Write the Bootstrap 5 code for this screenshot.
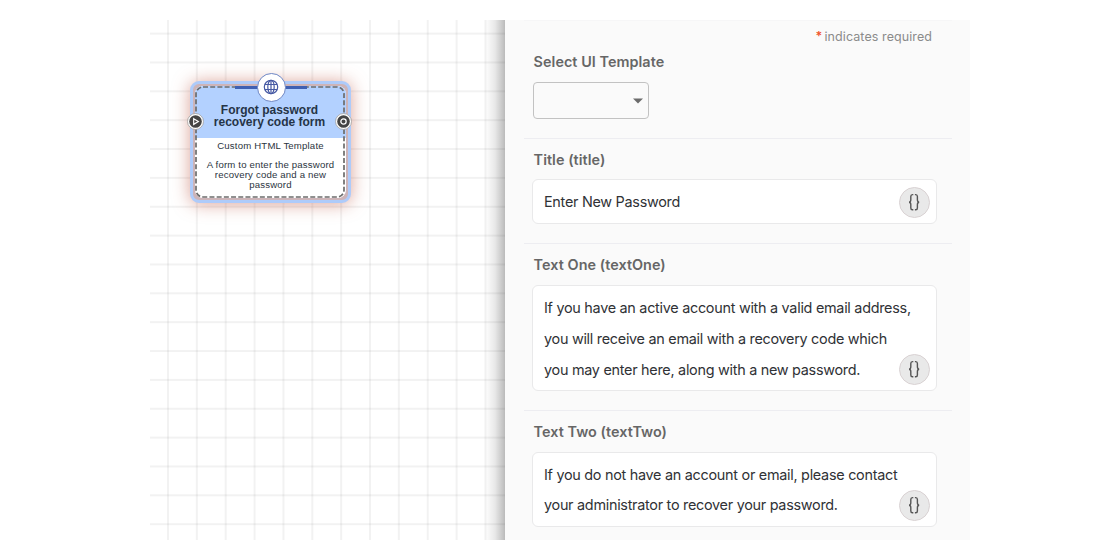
<!DOCTYPE html>
<html lang="en">
<head>
<meta charset="utf-8">
<title>Flow editor</title>
<link rel="stylesheet" href="https://cdn.jsdelivr.net/npm/bootstrap@5.3.0/dist/css/bootstrap.min.css">
<style>
body{font-family:Inter,"Liberation Sans",sans-serif;background:#fff}
.editor{width:820px;height:520px;margin:20px 0 0 150px}
.flow-canvas{width:355px;
  background-image:linear-gradient(90deg,rgba(0,0,0,.05) 2px,transparent 2px),linear-gradient(rgba(0,0,0,.05) 2px,transparent 2px);
  background-size:28.87px 28.87px;background-position:17px 0,0 12.6px}
.flow-canvas::after{content:"";position:absolute;inset:0 0 0 auto;width:20px;background:linear-gradient(90deg,rgba(0,0,0,0),rgba(0,0,0,.09) 50%,rgba(0,0,0,.27))}
.node{left:40px;top:61px;width:161px;height:122px;border:3px solid #aecbfa;border-radius:9px;padding:2px;background:#cdb4b8;box-shadow:0 1px 17px rgba(190,85,65,.55)}
.node-body{height:112px;border-radius:8px;background:#fff;font-family:"Liberation Sans",Arial,sans-serif;color:#2b3440}
.node-frame{inset:2px 3px 2px 2px}
.node-head{height:52px;background:#b3d1ff;padding:18px 2px 0 0;font-size:12px;line-height:12px;font-weight:700;color:#253447}
.node-text{font-size:9.6px;line-height:9.7px;letter-spacing:.18px}
.node-globe{width:29px;height:29px;left:63.5px;top:-11.5px;border:1px solid #6d86c4;background:#fff}
.node-bar{left:42px;top:2px;width:72px;height:3px;background:#3f60b3}
.port{top:29px;width:17px;height:17px}
.form-pane{width:465px;background:#fafafa;padding:0 18px 0 19px}
.sect{border-top:1px solid #ededf1}
.sect:first-child{border-color:#f6f6f7}
.field-label{font-size:14.4px;font-weight:600;color:#666;line-height:20px;letter-spacing:.05px;padding-left:9.6px}
.field-box{margin:0 15px 0 7.5px;width:405px;border:1.5px solid #e9e9ea;border-radius:6px;background:#fff;font-size:14.4px;line-height:30.8px;letter-spacing:-.275px;color:#303236;padding:7px 0 0 11.5px}
.token{right:6px;bottom:5px;width:31px;height:31px;border:1px solid #d9d2d3;background:#e9e9e9}
.required-note{font-size:12.5px;line-height:18px;letter-spacing:.08px;color:#8b8b8b;padding:7px 20px 0 0}
.required-note span{color:#f0522b;font-weight:600;margin-right:-1.5px}
.picker{width:116px;height:37px;margin:10px 0 0 9px;border:1px solid #c2c2c2;border-radius:4px;padding-right:5px}
</style>
</head>
<body>
<svg width="0" height="0" class="position-absolute"><defs>
<symbol id="braces" viewBox="0 0 29 29"><path d="M13.3 6.6h-.8q-1.7 0-1.7 1.8v3.4q0 2.4-1.8 2.4q1.8 0 1.8 2.4v3.4q0 1.8 1.7 1.8h.8M14.9 6.6h.8q1.7 0 1.7 1.8v3.4q0 2.4 1.8 2.4q-1.8 0-1.8 2.4v3.4q0 1.8-1.7 1.8h-.8" fill="none" stroke="#555" stroke-width="1.4"/></symbol>
</defs></svg>
<main class="editor d-flex overflow-hidden">
  <section class="flow-canvas position-relative flex-shrink-0">
    <article class="node position-absolute">
      <div class="node-body overflow-hidden text-center">
        <div class="node-head">Forgot password<br>recovery code form</div>
        <div class="node-text" style="padding-top:3px">Custom HTML Template</div>
        <div class="node-text" style="padding-top:9.4px">A form to enter the password<br>recovery code and a new<br>password</div>
      </div>
      <svg class="node-frame position-absolute" width="150" height="112"><rect x="1" y="1" width="148" height="110" rx="7" fill="none" stroke="#6c6c6c" stroke-width="1.7" stroke-dasharray="5 2.2"/></svg>
      <div class="node-bar position-absolute"></div>
      <div class="node-globe position-absolute rounded-circle d-flex align-items-center justify-content-center">
        <svg width="16" height="16" viewBox="0 0 16 16" fill="none" stroke="#4659a3" stroke-width="1.2"><circle cx="8" cy="8" r="6.7"/><ellipse cx="8" cy="8" rx="3.2" ry="6.7"/><path d="M8 1.3v13.4M2 5.5h12M2 10.5h12"/></svg>
      </div>
      <svg class="port position-absolute" style="left:-6px" viewBox="0 0 16 16"><circle cx="8" cy="8" r="7.5" fill="#fff" stroke="#999" stroke-width=".7"/><circle cx="8" cy="8" r="5.9" fill="#444"/><path d="M6.3 5.3l4.4 2.7-4.4 2.7z" fill="#444" stroke="#fff" stroke-width="1.1"/></svg>
      <svg class="port position-absolute" style="left:142px" viewBox="0 0 16 16"><circle cx="8" cy="8" r="7.5" fill="#fff" stroke="#999" stroke-width=".7"/><circle cx="8" cy="8" r="5.9" fill="#444"/><circle cx="8" cy="8" r="2.5" fill="#444" stroke="#fff" stroke-width="1.2"/></svg>
    </article>
  </section>
  <section class="form-pane flex-shrink-0">
    <div class="sect" style="height:118px">
      <div class="required-note text-end"><span>*</span> indicates required</div>
      <div class="field-label" style="padding-top:6px">Select UI Template</div>
      <div class="picker d-flex align-items-center justify-content-end"><svg width="10" height="6"><path d="M0 .5h10L5 5.5z" fill="#6b6b6b"/></svg></div>
    </div>
    <div class="sect" style="height:105px">
      <div class="field-label" style="padding-top:11px">Title (title)</div>
      <div class="field-box position-relative" style="height:45px;margin-top:9px">Enter New Password
        <div class="token position-absolute rounded-circle"><svg class="d-block" width="29" height="29"><use href="#braces"/></svg></div></div>
    </div>
    <div class="sect" style="height:167px">
      <div class="field-label" style="padding-top:11px">Text One (textOne)</div>
      <div class="field-box position-relative" style="height:106px;margin-top:10px">If you have an active account with a valid email address,<br>you will receive an email with a recovery code which<br>you may enter here, along with a new password.
        <div class="token position-absolute rounded-circle"><svg class="d-block" width="29" height="29"><use href="#braces"/></svg></div></div>
    </div>
    <div class="sect">
      <div class="field-label" style="padding-top:11px">Text Two (textTwo)</div>
      <div class="field-box position-relative" style="height:75px;margin-top:9.5px">If you do not have an account or email, please contact<br>your administrator to recover your password.
        <div class="token position-absolute rounded-circle"><svg class="d-block" width="29" height="29"><use href="#braces"/></svg></div></div>
    </div>
  </section>
</main>
<script src="https://cdn.jsdelivr.net/npm/bootstrap@5.3.0/dist/js/bootstrap.bundle.min.js"></script>
</body>
</html>
